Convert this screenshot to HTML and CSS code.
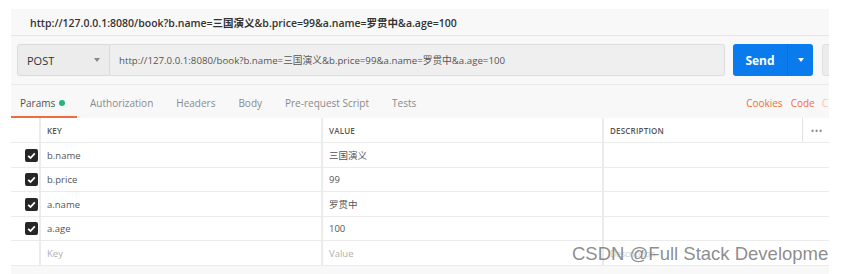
FILE: index.html
```html
<!DOCTYPE html>
<html>
<head>
<meta charset="utf-8">
<link rel="stylesheet" href="styles.css">
</head>
<body>
<div class="app">
  <div class="titlebar">http://127.0.0.1:8080/book?b.name=三国演义&amp;b.price=99&amp;a.name=罗贯中&amp;a.age=100</div>
  <div class="urlbar">
    <div class="method"><span>POST</span><span class="caret"></span></div>
    <div class="url">http://127.0.0.1:8080/book?b.name=三国演义&amp;b.price=99&amp;a.name=罗贯中&amp;a.age=100</div>
    <div class="send"><span class="send-label">Send</span><span class="send-drop"><span class="caret white"></span></span></div>
    <div class="save"></div>
  </div>
  <div class="tabs">
    <div class="tab active">Params <span class="dot"></span></div>
    <div class="tab t-auth">Authorization</div>
    <div class="tab t-gap">Headers</div>
    <div class="tab t-gap">Body</div>
    <div class="tab t-gap">Pre-request Script</div>
    <div class="tab t-gap">Tests</div>
    <div class="spacer"></div>
    <div class="link">Cookies</div>
    <div class="link">Code</div>
    <div class="link faint">C</div>
  </div>
  <div class="table">
    <div class="row head">
      <div class="c chk"></div>
      <div class="c key">KEY</div>
      <div class="c val">VALUE</div>
      <div class="c desc">DESCRIPTION</div>
      <div class="c more">•••</div>
    </div>
    <div class="row">
      <div class="c chk"><span class="box"><svg viewBox="0 0 13 13" width="13" height="13"><path d="M3.2 6.8 L5.5 9 L9.8 4.3" fill="none" stroke="#fff" stroke-width="1.8"/></svg></span></div>
      <div class="c key">b.name</div>
      <div class="c val">三国演义</div>
      <div class="c desc"></div>
      <div class="c more"></div>
    </div>
    <div class="row">
      <div class="c chk"><span class="box"><svg viewBox="0 0 13 13" width="13" height="13"><path d="M3.2 6.8 L5.5 9 L9.8 4.3" fill="none" stroke="#fff" stroke-width="1.8"/></svg></span></div>
      <div class="c key">b.price</div>
      <div class="c val">99</div>
      <div class="c desc"></div>
      <div class="c more"></div>
    </div>
    <div class="row">
      <div class="c chk"><span class="box"><svg viewBox="0 0 13 13" width="13" height="13"><path d="M3.2 6.8 L5.5 9 L9.8 4.3" fill="none" stroke="#fff" stroke-width="1.8"/></svg></span></div>
      <div class="c key">a.name</div>
      <div class="c val">罗贯中</div>
      <div class="c desc"></div>
      <div class="c more"></div>
    </div>
    <div class="row">
      <div class="c chk"><span class="box"><svg viewBox="0 0 13 13" width="13" height="13"><path d="M3.2 6.8 L5.5 9 L9.8 4.3" fill="none" stroke="#fff" stroke-width="1.8"/></svg></span></div>
      <div class="c key">a.age</div>
      <div class="c val">100</div>
      <div class="c desc"></div>
      <div class="c more"></div>
    </div>
    <div class="row">
      <div class="c chk"></div>
      <div class="c key ph">Key</div>
      <div class="c val ph">Value</div>
      <div class="c desc ph faintph">Description</div>
      <div class="c more"></div>
    </div>
  </div>
  <div class="watermark">CSDN @Full Stack Development</div>
</div>
</body>
</html>
```
FILE: styles.css
```css
* { box-sizing: border-box; }
html, body { margin: 0; padding: 0; background: #fff; }
body { font-family: "Open Sans", "Noto Sans CJK SC", sans-serif; }

.app {
  position: relative;
  margin: 9px 0 0 11px;
  width: 818px;
  height: 265px;
  background: #f8f8f8;
  overflow: hidden;
}

.titlebar {
  height: 27px;
  line-height: 28px;
  padding-left: 19px;
  font-size: 10.5px;
  font-weight: 600;
  color: #333;
  border-bottom: 1px solid #e6e6e6;
  white-space: nowrap;
}

.urlbar {
  display: flex;
  align-items: stretch;
  height: 49px;
  padding: 8px 0 8px 6px;
  border-bottom: 1px solid #e9e9e9;
}
.method {
  width: 93px;
  flex: none;
  display: flex;
  align-items: center;
  justify-content: space-between;
  padding: 0 9px 0 9px;
  background: #ececec;
  border: 1px solid #dadada;
  border-radius: 3px 0 0 3px;
  font-size: 11px;
  color: #333;
}
.caret {
  width: 0; height: 0;
  border-left: 3.5px solid transparent;
  border-right: 3.5px solid transparent;
  border-top: 4px solid #888;
}
.caret.white { border-top-color: #fff; }
.url {
  width: 615px;
  flex: none;
  display: flex;
  align-items: center;
  padding-left: 9px;
  background: #efefef;
  border: 1px solid #dcdcdc;
  border-left: none;
  border-radius: 0 3px 3px 0;
  font-size: 9.7px;
  color: #555;
  white-space: nowrap;
}
.send {
  width: 80px;
  flex: none;
  margin-left: 8px;
  display: flex;
  background: #097bed;
  border-radius: 3px;
  color: #fff;
}
.send-label {
  width: 55px;
  display: flex;
  align-items: center;
  justify-content: center;
  font-size: 12px;
  font-weight: 700;
  border-right: 1px solid #0b6fd6;
}
.send-drop {
  flex: 1;
  display: flex;
  align-items: center;
  justify-content: center;
}
.save {
  width: 40px;
  flex: none;
  margin-left: 9px;
  background: #ececec;
  border: 1px solid #e0e0e0;
  border-radius: 3px;
}

.tabs {
  display: flex;
  align-items: stretch;
  height: 33px;
  font-size: 10px;
  color: #8a8a8a;
}
.tab {
  display: flex;
  align-items: center;
  padding-top: 3px;
}
.tab.active {
  padding-left: 9px;
  width: 66px;
  color: #505050;
  border-bottom: 2px solid #f26b3a;
  padding-top: 5px;
}
.dot {
  display: inline-block;
  width: 6px; height: 6px;
  border-radius: 50%;
  background: #26b47f;
  margin-left: 4px;
}
.t-auth { margin-left: 13px; }
.t-gap { margin-left: 23px; }
.spacer { flex: 1; }
.link {
  display: flex;
  align-items: center;
  color: #f26b3a;
  margin-left: 8px;
  padding-top: 3px;
}
.link.faint { color: #f8c4ae; margin-right: 1px; margin-left: 7px; }

.table {
  background: #fff;
}
.row {
  display: grid;
  grid-template-columns: 30px 282px 281px 199px 26px;
  height: 24.5px;
  border-bottom: 1px solid #ebebeb;
  font-size: 9.5px;
  color: #555;
}
.row.head {
  height: 25px;
  font-size: 8px;
  font-weight: 600;
  color: #555;
  letter-spacing: 0.2px;
}
.c {
  display: flex;
  align-items: center;
  padding-left: 6px;
  padding-top: 1px;
  white-space: nowrap;
  overflow: hidden;
}
.chk {
  padding-left: 14px;
  border-right: 2px solid #ebebeb;
}
.val, .key { border-right: 2px solid #ebebeb; }
.desc { border-right: none; }
.head .desc { border-right: 1px solid #e2e2e2; }
.more {
  font-size: 8px;
  color: #888;
  padding-left: 8px;
  letter-spacing: 1px;
}
.box {
  display: block;
  width: 13px; height: 13px;
  background: #262626;
  border-radius: 2px;
}
.box svg { display: block; }
.ph { color: #b0b0b0; }
.faintph { color: #cfcfcf; font-size: 8.5px; }

.watermark {
  position: absolute;
  left: 561px;
  top: 234px;
  font-family: "Liberation Sans", Arial, sans-serif;
  font-size: 18.5px;
  color: rgba(120,120,120,0.85);
  white-space: nowrap;
}
```
